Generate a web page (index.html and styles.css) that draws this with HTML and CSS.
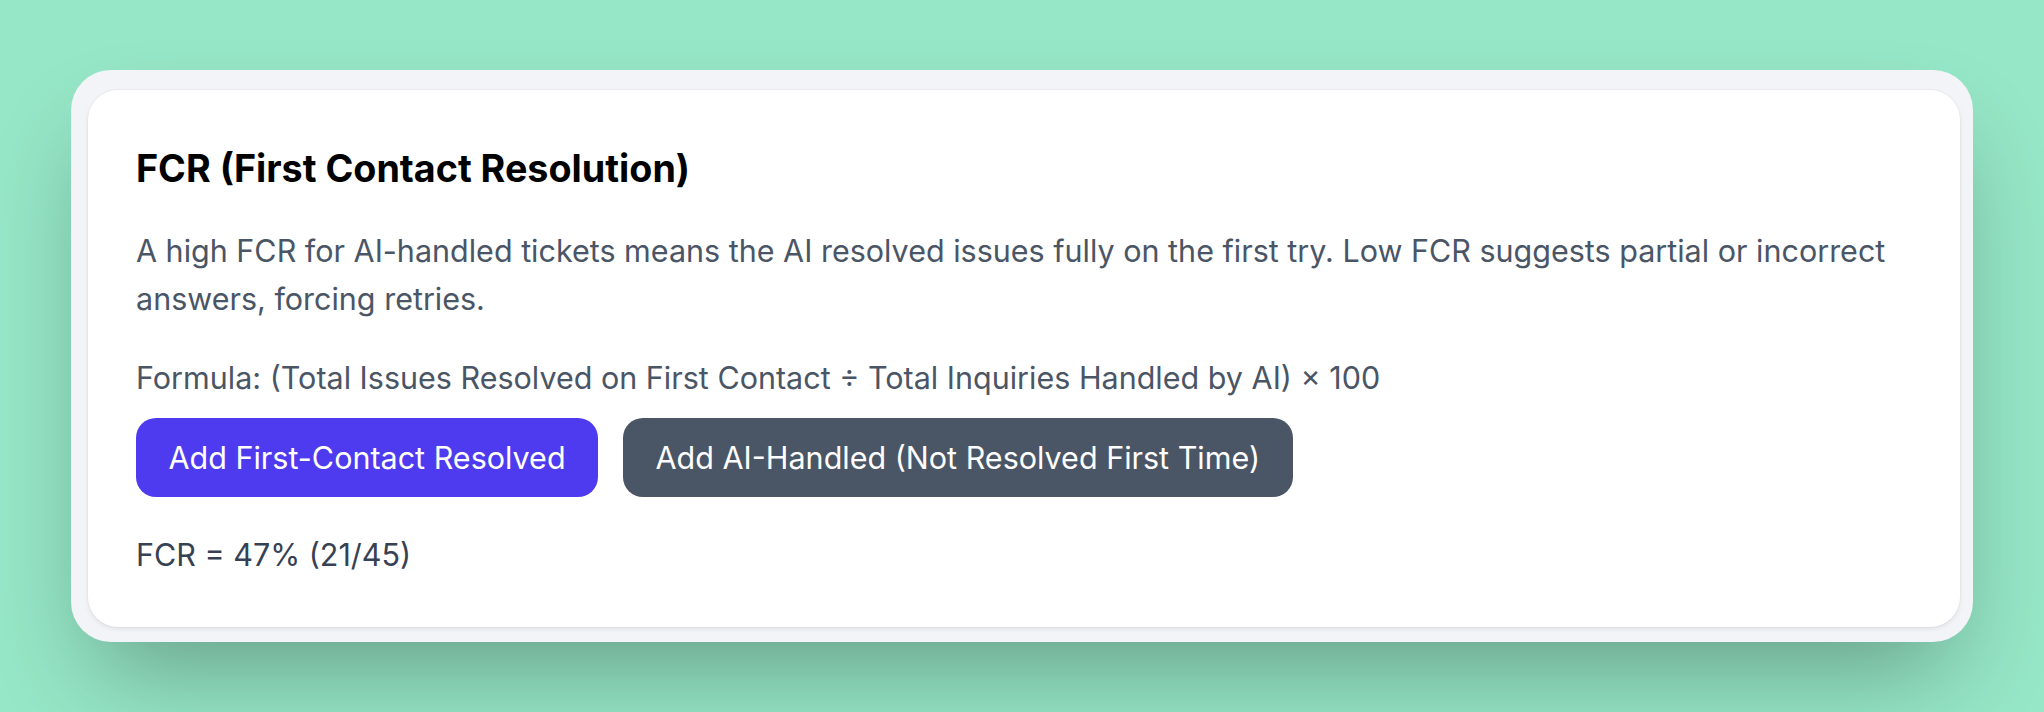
FILE: index.html
```html
<!DOCTYPE html>
<html lang="en">
<head>
<meta charset="utf-8">
<title>FCR (First Contact Resolution)</title>
<link rel="stylesheet" href="styles.css">
</head>
<body>
  <div class="frame">
    <section class="card">
      <h2 class="card-title">FCR (First Contact Resolution)</h2>
      <p class="card-desc">A high FCR for AI-handled tickets means the AI resolved issues fully on the first try. Low FCR suggests partial or incorrect answers, forcing retries.</p>
      <p class="card-formula">Formula: (Total Issues Resolved on First Contact ÷ Total Inquiries Handled by AI) × 100</p>
      <div class="actions">
        <button class="btn btn-primary" type="button">Add First-Contact Resolved</button>
        <button class="btn btn-secondary" type="button">Add AI-Handled (Not Resolved First Time)</button>
      </div>
      <p class="card-result">FCR = 47% (21/45)</p>
    </section>
  </div>
</body>
</html>
```
FILE: styles.css
```css
* { box-sizing: border-box; }

body {
  margin: 0;
  padding: 70px 71px;
  background: #96e7c7;
  font-family: Inter, "Noto Sans", sans-serif;
  min-height: 712px;
}

.frame {
  background: #f3f4f7;
  border-radius: 40px;
  padding: 20px 13px 15px 17px;
  box-shadow: 0 50px 100px -24px rgba(0, 0, 0, 0.32);
}

.card {
  background: #ffffff;
  border-radius: 30px;
  padding: 50px 48px 48px 48px;
  box-shadow: 0 0 0 1px rgba(0, 0, 0, 0.025), 0 2px 5px rgba(0, 0, 0, 0.08);
}

.card-title {
  margin: 0 0 31px 0;
  font-size: 37.7px;
  line-height: 56px;
  font-weight: 700;
  color: #000000;
}

.card-desc,
.card-formula,
.card-result {
  margin: 0;
  font-size: 30.5px;
  line-height: 48px;
  color: #4a5565;
}

.card-desc { margin-bottom: 31px; }

.card-result {
  margin-top: 34px;
  color: #364153;
}

.actions {
  display: flex;
  gap: 25px;
  margin-top: 16px;
}

.btn {
  font-family: inherit;
  font-size: 30.5px;
  line-height: 48px;
  padding: 15.5px 32.5px;
  border: 0;
  border-radius: 20px;
  color: #ffffff;
  cursor: pointer;
}

.btn-primary { background: #4e3bf0; }
.btn-secondary { background: #4a5565; }
```
